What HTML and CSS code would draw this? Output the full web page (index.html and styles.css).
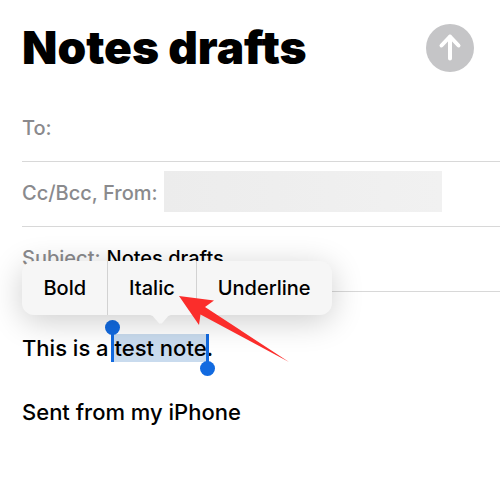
FILE: index.html
```
<!DOCTYPE html>
<html lang="en">
<head>
<meta charset="utf-8">
<meta name="viewport" content="width=device-width, initial-scale=1">
<title>Notes drafts</title>
<link rel="stylesheet" href="styles.css">
</head>
<body>
<main class="compose">
  <header class="header">
    <h1 class="title">Notes drafts</h1>
    <button class="send" type="button" aria-label="Send">
      <svg viewBox="0 0 48 48" fill="none" stroke="#fff" stroke-width="4" stroke-linecap="round" stroke-linejoin="round" aria-hidden="true">
        <path d="M24 34.500V12.500M15.500 21.500l8.500-9 8.500 9"/>
      </svg>
    </button>
  </header>
  <form class="fields">
    <div class="field">
      <label for="to">To:</label>
      <input id="to" type="text">
    </div>
    <div class="field">
      <label for="from">Cc/Bcc, From:</label>
      <input id="from" class="masked" type="text">
    </div>
    <div class="field">
      <label for="subject">Subject:</label>
      <input id="subject" type="text" value="Notes drafts">
    </div>
  </form>
  <section class="message">
    <p>This is a <span class="selection">test note<span class="handle handle-start"></span><span class="handle handle-end"></span><span class="menu" role="toolbar" aria-label="Format"><button type="button">Bold</button><button type="button">Italic</button><button type="button">Underline</button></span><svg class="pointer" viewBox="0 0 110 66" aria-hidden="true"><path fill="#fb2d2b" d="M0 0L35 4.500 26 11 110 66 21.500 18.500 20 29z"/></svg></span>.</p>
    <p>Sent from my iPhone</p>
  </section>
</main>
</body>
</html>
```
FILE: styles.css
```
* {
  box-sizing: border-box;
}

body {
  margin: 0;
  background: #fff;
  color: #000;
  font: 500 20px/28px Inter, "Liberation Sans", sans-serif;
}

button,
input {
  border: 0;
  padding: 0;
  background: none;
  color: inherit;
  font: inherit;
}

.compose {
  padding-left: 22px;
}

.header {
  display: flex;
  align-items: center;
  justify-content: space-between;
  height: 96px;
  padding-right: 26px;
}

.title {
  margin: 0;
  padding-bottom: 2px;
  font-size: 46px;
  line-height: 52px;
  font-weight: 900;
}

.send {
  width: 48px;
  height: 48px;
  border-radius: 50%;
  background: #c5c5c7;
}

.send svg {
  display: block;
}

.field {
  display: flex;
  align-items: center;
  gap: 6px;
  height: 65px;
  padding-bottom: 2px;
  border-bottom: 1px solid #d8d8d8;
}

.field:first-child {
  height: 66px;
}

.field label {
  color: #8a8a8d;
}

.field input {
  flex: 1;
  min-width: 0;
  outline: 0;
}

.field .masked {
  height: 41px;
  margin: 0 58px 4px 0;
  background: linear-gradient(90deg, #ececec, #f1f1f1);
}

.message {
  padding-top: 42px;
  font-size: 22px;
}

.message p {
  margin: 0 0 36px;
}

.selection {
  position: relative;
  display: inline-block;
  background: #c9dbee;
}

.handle {
  position: absolute;
  top: 0;
  bottom: 0;
  width: 3px;
  background: #126ae0;
}

.handle::after {
  content: "";
  position: absolute;
  left: -6px;
  width: 15px;
  height: 15px;
  border-radius: 50%;
  background: #126ae0;
}

.handle-start {
  left: -3px;
}

.handle-start::after {
  top: -14px;
}

.handle-end {
  right: -2px;
}

.handle-end::after {
  bottom: -14px;
}

.menu {
  position: absolute;
  left: -92px;
  bottom: 47px;
  display: flex;
  height: 54px;
  border-radius: 12px;
  background: #f6f6f6;
  font-size: 20px;
  box-shadow: 0 6px 32px rgba(0, 0, 0, 0.2);
}

.menu::after {
  content: "";
  position: absolute;
  top: 53px;
  left: 125px;
  width: 26px;
  height: 10px;
  background: #f6f6f6;
  clip-path: polygon(0 0, 100% 0, 80% 20%, 55% 95%, 45% 95%, 20% 20%);
}

.menu button {
  padding: 0 21px;
}

.menu button + button {
  border-left: 1px solid #d2d2d2;
}

.pointer {
  position: absolute;
  left: 65px;
  top: -38px;
  width: 110px;
  height: 66px;
}
```
